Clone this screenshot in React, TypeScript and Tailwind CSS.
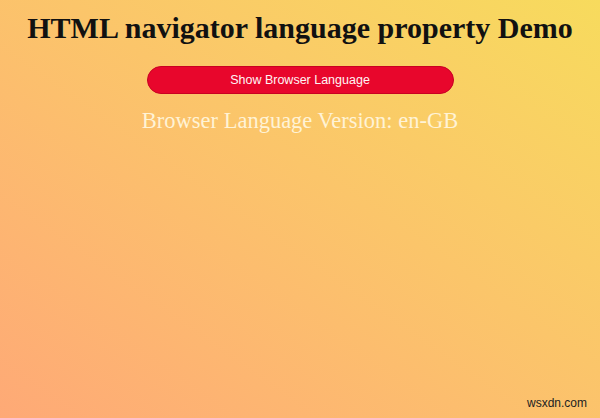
export default function App() {
  return (
    <div className="relative h-[418px] w-[600px] overflow-hidden bg-gradient-to-tr from-[#fea976] to-[#f7db5d]">
      <div className="flex flex-col items-center">
        <h1 className="mt-[10px] font-['Liberation_Serif',serif] text-[30px] font-bold leading-[35px] text-[#111]">
          HTML navigator language property Demo
        </h1>
        <button className="mt-[21px] h-[28px] w-[307px] rounded-full border border-[#c90022] bg-[#e8062c] font-['Liberation_Sans',sans-serif] text-[12.5px] text-[#fff4f4]">
          Show Browser Language
        </button>
        <p className="mt-[14px] font-['Liberation_Serif',serif] text-[22.5px] leading-[26px] text-[#fff3d6]">
          Browser Language Version: en-GB
        </p>
      </div>
      <span className="absolute bottom-[6px] right-[13px] font-['Liberation_Sans',sans-serif] text-[12px] text-[#222]">
        wsxdn.com
      </span>
    </div>
  );
}
